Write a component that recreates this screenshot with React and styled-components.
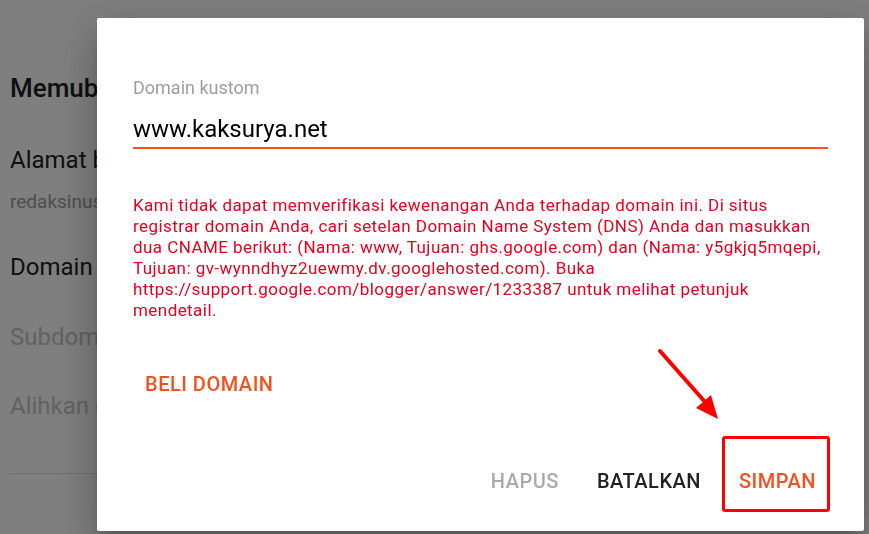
import React from 'react';
import styled, { createGlobalStyle } from 'styled-components';

const GlobalStyle = createGlobalStyle`
  html, body {
    margin: 0;
    padding: 0;
    background: #fff;
    font-family: Roboto, "Liberation Sans", Arial, sans-serif;
  }
  * { box-sizing: border-box; }
`;

const Page = styled.div`
  width: 869px;
  height: 534px;
  padding: 0 10px;
  overflow: hidden;
`;

const PageTitle = styled.h1`
  margin: 74px 0 0;
  font-size: 26px;
  line-height: 28px;
  font-weight: 500;
  color: #212121;
`;

const SettingTitle = styled.div`
  margin-top: ${(p) => p.$top}px;
  font-size: 24px;
  line-height: 28px;
  color: ${(p) => (p.$muted ? '#c4c4c4' : '#212121')};
`;

const SettingValue = styled.div`
  margin-top: 16px;
  font-size: 19px;
  line-height: 24px;
  color: #9a9a9a;
`;

const Divider = styled.hr`
  margin: 53px 0 0;
  border: 0;
  border-top: 1px solid #e0e0e0;
`;

const Overlay = styled.div`
  position: fixed;
  inset: 0;
  background: rgba(0, 0, 0, 0.5);
  display: flex;
  align-items: flex-start;
  padding: 18px 5px 0 97px;
`;

const Dialog = styled.div`
  width: 767px;
  height: 513px;
  background: #fff;
  border-radius: 2px;
  padding: 59px 36px 30px;
  display: flex;
  flex-direction: column;
  box-shadow: 0 11px 15px -7px rgba(0, 0, 0, 0.2),
    0 24px 38px 3px rgba(0, 0, 0, 0.14), 0 9px 46px 8px rgba(0, 0, 0, 0.12);
`;

const Label = styled.label`
  font-size: 18px;
  line-height: 22px;
  color: #9e9e9e;
`;

const Input = styled.input`
  margin-top: 15px;
  width: 100%;
  border: 0;
  border-bottom: 2px solid #f4511e;
  padding: 0 0 3px;
  font-family: inherit;
  font-size: 24px;
  line-height: 30px;
  height: 35px;
  color: #000;
  outline: none;
  background: transparent;
`;

const ErrorText = styled.p`
  margin: 46px 0 0;
  font-size: 17px;
  line-height: 21px;
  letter-spacing: 0.44px;
  color: #e6001f;
`;

const TextButton = styled.button`
  border: 0;
  background: none;
  padding: 8px 12px;
  font-family: inherit;
  font-size: 20px;
  line-height: 24px;
  letter-spacing: 0.5px;
  font-weight: 500;
  text-transform: uppercase;
  cursor: pointer;
  color: ${(p) => p.$color || '#f4511e'};
`;

const BuyRow = styled.div`
  margin-top: 43px;
  display: flex;
`;

const Footer = styled.div`
  margin-top: auto;
  display: flex;
  justify-content: flex-end;
  gap: 14px;
`;

const Highlight = styled.div`
  position: absolute;
  left: 722px;
  top: 436px;
  width: 108px;
  height: 76px;
  border: 3px solid #ff0000;
  border-radius: 3px;
  pointer-events: none;
`;

const Arrow = styled.svg`
  position: absolute;
  left: 650px;
  top: 340px;
  pointer-events: none;
`;

export default function App() {
  return (
    <>
      <GlobalStyle />
      <Page>
        <PageTitle>Memublikasikan</PageTitle>
        <SettingTitle $top={44}>Alamat blog</SettingTitle>
        <SettingValue>redaksinusantara.blogspot.com</SettingValue>
        <SettingTitle $top={39}>Domain kustom</SettingTitle>
        <SettingTitle $top={42} $muted>Subdomain khusus</SettingTitle>
        <SettingTitle $top={41} $muted>Alihkan domain</SettingTitle>
        <Divider />
      </Page>
      <Overlay>
        <Dialog>
          <Label htmlFor="domain">Domain kustom</Label>
          <Input id="domain" defaultValue="www.kaksurya.net" />
          <ErrorText>
            Kami tidak dapat memverifikasi kewenangan Anda terhadap domain ini. Di situs
            <br />
            registrar domain Anda, cari setelan Domain Name System (DNS) Anda dan masukkan
            <br />
            dua CNAME berikut: (Nama: www, Tujuan: ghs.google.com) dan (Nama: y5gkjq5mqepi,
            <br />
            Tujuan: gv-wynndhyz2uewmy.dv.googlehosted.com). Buka
            <br />
            https://support.google.com/blogger/answer/1233387 untuk melihat petunjuk
            <br />
            mendetail.
          </ErrorText>
          <BuyRow>
            <TextButton>Beli domain</TextButton>
          </BuyRow>
          <Footer>
            <TextButton $color="#aaaaaa">Hapus</TextButton>
            <TextButton $color="#212121">Batalkan</TextButton>
            <TextButton>Simpan</TextButton>
          </Footer>
        </Dialog>
        <Highlight />
        <Arrow width="80" height="90" viewBox="650 340 80 90">
          <line x1="660" y1="351" x2="706" y2="403" stroke="#ff0000" strokeWidth="4" strokeLinecap="round" />
          <polygon points="718,419 696,408 711,395" fill="#ff0000" />
        </Arrow>
      </Overlay>
    </>
  );
}
